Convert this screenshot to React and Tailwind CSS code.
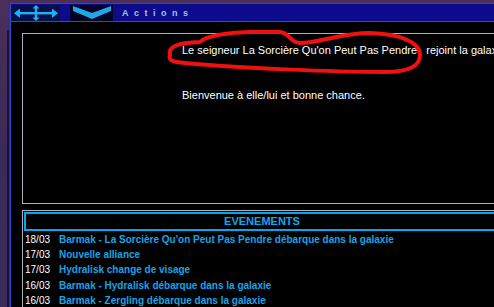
import React from "react";

const events = [
  { date: "18/03", text: "Barmak - La Sorcière Qu'on Peut Pas Pendre débarque dans la galaxie" },
  { date: "17/03", text: "Nouvelle alliance" },
  { date: "17/03", text: "Hydralisk change de visage" },
  { date: "16/03", text: "Barmak - Hydralisk débarque dans la galaxie" },
  { date: "16/03", text: "Barmak - Zergling débarque dans la galaxie" },
];

function MoveIcon() {
  return (
    <svg width="44" height="16" viewBox="0 0 44 16" className="block">
      <g fill="#1fb0f0">
        <rect x="4" y="7" width="36" height="2.4" />
        <polygon points="0,8.2 6,3.5 6,12.9" />
        <polygon points="44,8.2 38,3.5 38,12.9" />
        <rect x="20.8" y="2" width="2.4" height="12" />
        <polygon points="22,0 18.5,3.5 25.5,3.5" />
        <polygon points="22,16 18.5,12.5 25.5,12.5" />
      </g>
    </svg>
  );
}

function ChevronIcon() {
  return (
    <svg width="38" height="14" viewBox="0 0 38 14" className="block">
      <polygon points="0,0 19,7 38,0 38,5 19,13 0,5" fill="#1fa8e6" />
    </svg>
  );
}

export default function App() {
  return (
    <div
      className="w-[494px] h-[307px] overflow-hidden flex bg-gradient-to-b from-[#4a2f5c] via-[#3b2a55] to-[#3a2c58]"
      style={{ fontFamily: '"Liberation Sans", Arial, sans-serif' }}
    >
      {/* space background strip */}
      <div className="w-[10px] shrink-0 flex justify-end">
        <div className="w-[2px] mt-[30px] bg-[#1a1230]" />
        <div className="w-[1px]" />
      </div>

      <div className="flex-1 flex flex-col pt-[3px] min-w-0">
        {/* title bar */}
        <div className="h-[19px] shrink-0 bg-[#0b0b8c] border border-r-0 border-[#2848d8] flex items-center">
          <div className="ml-[1px] w-[48px] h-[16px] bg-[#03104c] flex items-center justify-center">
            <MoveIcon />
          </div>
          <div className="ml-[10px] w-[43px] h-[16px] bg-[#020224] flex items-start justify-center pt-[1px]">
            <ChevronIcon />
          </div>
          <span className="ml-[9px] mt-[3px] text-[9px] font-bold tracking-[5.5px] text-[#a8c0ee]">
            Actions
          </span>
        </div>

        {/* body */}
        <div className="flex-1 bg-black border-l border-[#2848d8] pl-[11px] pt-[11px] min-w-0">
          <div className="relative h-[171px] border border-r-0 border-[#a9b0b8] text-white text-[11px] leading-[13px] whitespace-nowrap">
            <p className="absolute left-[159px] top-[10px]">
              Le seigneur La Sorcière Qu'on Peut Pas Pendre &nbsp;&nbsp;rejoint la galaxie
            </p>
            <p className="absolute left-[159px] top-[55px]">
              Bienvenue à elle/lui et bonne chance.
            </p>
            {/* hand-drawn highlight */}
            <svg
              className="absolute left-[-23px] top-[-34px] pointer-events-none"
              width="494"
              height="100"
              viewBox="0 0 494 100"
            >
              <path
                d="M170 55 C168 46 178 43 200 42 C205 36 230 32 250 32 L280 32 C290 33 290 43 300 43 C320 43 340 33 370 33 C400 34 420 42 420 55 C420 68 405 72 385 72 C330 72 240 68 185 63 C172 62 168 60 170 55 Z"
                fill="none"
                stroke="#f01010"
                strokeWidth="4"
                strokeLinejoin="round"
              />
            </svg>
          </div>

          {/* events */}
          <div className="mt-[6px] border border-r-0 border-[#a9b0b8] pl-[1px] pt-[1px]">
            <div className="h-[19px] border-2 border-r-0 border-[#00a8f0] flex items-center justify-center">
              <span className="text-[11px] font-bold text-[#14a6ec] pl-[4px]">EVENEMENTS</span>
            </div>
            <div className="pt-[1px]">
              {events.map((e, i) => (
                <div key={i} className="flex h-[15.2px] items-center text-[10px] whitespace-nowrap">
                  <span className="w-[35px] shrink-0 text-white pl-[1px]">{e.date}</span>
                  <span className="font-bold text-[#18a4e6]">{e.text}</span>
                </div>
              ))}
            </div>
          </div>
        </div>
      </div>
    </div>
  );
}
